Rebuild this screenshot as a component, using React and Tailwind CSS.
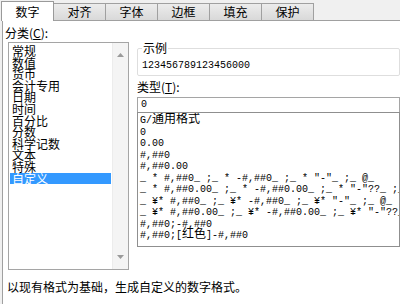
import React from "react";

const tabs = ["数字", "对齐", "字体", "边框", "填充", "保护"];

const categories = [
  "常规",
  "数值",
  "货币",
  "会计专用",
  "日期",
  "时间",
  "百分比",
  "分数",
  "科学记数",
  "文本",
  "特殊",
  "自定义",
];

// format codes, Chinese parts are wrapped so they keep the wider CJK size
const formats = [
  ["G/", <span key="c" className="text-[12px]">通用格式</span>],
  ["0"],
  ["0.00"],
  ["#,##0"],
  ["#,##0.00"],
  ['_ * #,##0_ ;_ * -#,##0_ ;_ * "-"_ ;_ @_ '],
  ['_ * #,##0.00_ ;_ * -#,##0.00_ ;_ * "-"??_ ;_ @_ '],
  ['_ ¥* #,##0_ ;_ ¥* -#,##0_ ;_ ¥* "-"_ ;_ @_ '],
  ['_ ¥* #,##0.00_ ;_ ¥* -#,##0.00_ ;_ ¥* "-"??_ ;_ @_ '],
  ["#,##0;-#,##0"],
  ["#,##0;[", <span key="c" className="text-[12px]">红色</span>, "]-#,##0"],
];

const Arrow = ({ down }) => (
  <svg width="7" height="4" viewBox="0 0 7 4" className="block">
    <path d={down ? "M0 0h7L3.5 4z" : "M0 4h7L3.5 0z"} fill="#9a9a9a" />
  </svg>
);

const App = () => {
  return (
    <div className="w-[400px] h-[304px] overflow-hidden bg-[#f0f0f0] text-black text-[12px] [font-family:'Noto_Sans_CJK_SC',sans-serif]">
      {/* tab strip */}
      <div className="flex items-end h-[20px] pl-[1px]">
        {tabs.map((t, i) =>
          i === 0 ? (
            <div
              key={t}
              className="relative z-10 w-[53px] h-[20px] mb-[-1px] bg-white border border-b-0 border-[#9a9a9a] flex items-center justify-center leading-none"
            >
              {t}
            </div>
          ) : (
            <div
              key={t}
              className="w-[52px] h-[17px] bg-gradient-to-b from-[#ececec] to-[#d9d9d9] border border-b-0 border-l-0 border-[#a0a0a0] flex items-center justify-center leading-none"
            >
              {t}
            </div>
          )
        )}
      </div>

      {/* panel */}
      <div className="ml-[2px] h-[284px] bg-white border-l border-t border-[#a0a0a0] pl-[2px]">
        <div className="flex gap-[8px]">
          {/* categories */}
          <div className="w-[124px] flex-shrink-0">
            <div className="mt-[4px] h-[16px] leading-[16px]">
              分类(<span className="underline">C</span>):
            </div>
            <div className="ml-[3px] mt-[1px] h-[228px] border border-[#a5a5a5] flex">
              <div className="flex-1 pt-[2px] pl-[1px] leading-[11.6px]">
                {categories.map((c) => (
                  <div
                    key={c}
                    className={
                      c === "自定义"
                        ? "bg-[#3399ff] text-white pl-[2px] mr-[1px]"
                        : "pl-[2px]"
                    }
                  >
                    {c}
                  </div>
                ))}
              </div>
              <div className="w-[16px] bg-[#f4f4f4] border-l border-[#ececec] flex flex-col items-center justify-between pt-[10px] pb-[10px]">
                <Arrow />
                <Arrow down />
              </div>
            </div>
          </div>

          {/* type side */}
          <div className="flex-1 min-w-0">
            <fieldset className="mt-[20px] h-[35px] border border-[#dedede] rounded-[2px] pl-[4px]">
              <legend className="px-[1px] leading-[14px]">示例</legend>
              <div className="mt-[5px] text-[10px] leading-[12px] [font-family:'Liberation_Mono',monospace]">
                123456789123456000
              </div>
            </fieldset>
            <div className="mt-[4px] h-[14px] leading-[14px]">
              类型(<span className="underline">T</span>):
            </div>
            <div className="mt-[3px] h-[15px] border border-b-0 border-[#a5a5a5] pl-[3px] text-[10px] leading-[14px] [font-family:'Liberation_Mono',monospace]">
              0
            </div>
            <div className="h-[135px] border border-[#8f8f8f] pl-[2px] pt-[2px] text-[10px] leading-[11.5px] whitespace-pre overflow-hidden [font-family:'Liberation_Mono','Noto_Sans_CJK_SC',monospace]">
              {formats.map((f, i) => (
                <div key={i} className="h-[11.5px]">
                  {f}
                </div>
              ))}
            </div>
          </div>
        </div>

        <div className="mt-[10px] pl-[2px] leading-[14px]">
          以现有格式为基础，生成自定义的数字格式。
        </div>
      </div>
    </div>
  );
};

export default App;
